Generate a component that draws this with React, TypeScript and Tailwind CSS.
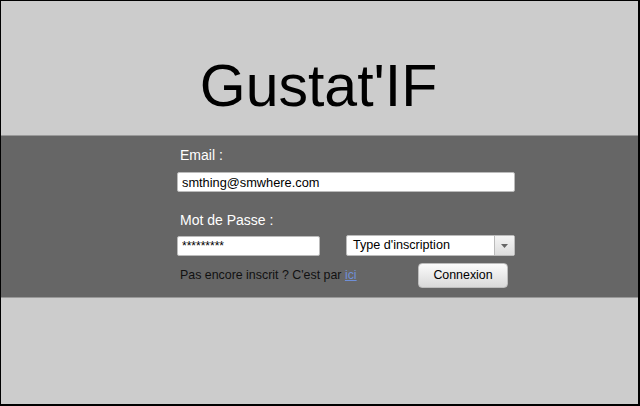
export default function App() {
  return (
    <div
      className="w-[640px] h-[406px] border border-r-2 border-b-2 border-black bg-[#cccccc] flex flex-col"
      style={{ fontFamily: '"Liberation Sans", Arial, sans-serif' }}
    >
      {/* Title */}
      <div className="h-[134px] flex justify-center pt-[50px] pr-[2px]">
        <h1 className="text-[59px] leading-[70px] text-black">Gustat'IF</h1>
      </div>

      {/* Login band */}
      <div className="h-[163px] bg-[#666666] border-y border-[#999999] pl-[176px] pt-[10px]">
        <div className="w-[338px] flex flex-col">
          <label className="text-white text-[14px] leading-[16px] pl-[3px] pt-[1px]">Email :</label>
          <input
            readOnly
            value="smthing@smwhere.com"
            className="mt-[9px] h-[20px] w-[338px] bg-white rounded-[2px] border border-[#bbbbbb] px-[4px] text-[12.8px] text-black outline-none"
          />

          <label className="text-white text-[14px] leading-[16px] pl-[3px] mt-[20px]">Mot de Passe :</label>
          <div className="mt-[7px] flex items-center justify-between">
            <input
              readOnly
              value="*********"
              className="h-[20px] w-[143px] bg-white rounded-[2px] border border-[#bbbbbb] px-[4px] text-[12px] text-black outline-none"
            />
            <div className="h-[21px] w-[169px] flex bg-white rounded-[2px] border border-[#bbbbbb] overflow-hidden">
              <span className="flex-1 pl-[6px] text-[12.6px] leading-[19px] text-black">Type d'inscription</span>
              <span className="w-[20px] border-l border-[#bbbbbb] bg-gradient-to-b from-[#f4f4f4] to-[#dddddd] flex items-center justify-center">
                <svg width="7" height="4" viewBox="0 0 7 4">
                  <path d="M0 0 L7 0 L3.5 4 Z" fill="#666666" />
                </svg>
              </span>
            </div>
          </div>

          <div className="mt-[7px] flex items-center justify-between pr-[7px]">
            <span className="pl-[3px] text-[12.4px] text-[#111111]">
              Pas encore inscrit ? C'est par{' '}
              <a href="#" className="text-[#6f8fd8] underline">ici</a>
            </span>
            <button className="h-[25px] w-[90px] rounded-[4px] bg-gradient-to-b from-[#fbfbfb] to-[#d9d9d9] border border-[#bdbdbd] text-[12.4px] text-black">
              Connexion
            </button>
          </div>
        </div>
      </div>

      <div className="flex-1" />
    </div>
  );
}
